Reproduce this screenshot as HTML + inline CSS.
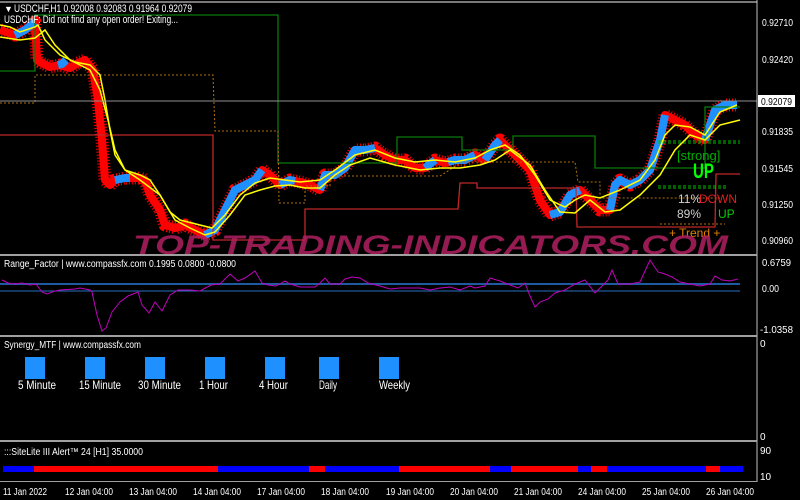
<!DOCTYPE html>
<html><head><meta charset="utf-8"><style>
html,body{margin:0;padding:0;background:#000;width:800px;height:500px;overflow:hidden}
svg{display:block}
text{font-family:"Liberation Sans",sans-serif}
</style></head><body>
<svg width="800" height="500" xmlns="http://www.w3.org/2000/svg">
<rect width="800" height="500" fill="#000"/>
<defs>
<polyline id="pp" points="0,30 15,35 25,30 35,22 37,60 40,62 50,67 60,65 70,68 78,63 85,60 93,70 98,100 102,140 105,180 110,185 115,180 125,178 140,178 145,180 150,195 160,210 165,225 175,228 185,225 195,230 205,235 215,230 225,210 235,190 245,185 255,180 262,170 270,175 280,185 290,180 300,182 310,185 320,190 325,175 335,175 345,168 355,150 365,150 375,148 385,155 395,160 405,160 415,168 425,168 435,160 445,163 455,160 465,160 475,155 485,160 495,145 500,140 510,150 520,160 530,170 540,200 550,215 560,212 570,195 580,190 590,200 600,210 610,210 615,185 620,180 630,185 640,180 650,170 660,140 665,115 675,120 685,125 695,135 705,140 715,110 725,105 737,105"/>
</defs>
<g fill="none" stroke-linejoin="round">
<use href="#pp" stroke="#ff0000" stroke-width="13" stroke-dasharray="1,2"/>
<use href="#pp" stroke="#ff0000" stroke-width="8"/>
<g stroke="#1e90ff" stroke-width="8">
<polyline points="15,35 25,30 35,22"/>
<polyline points="58,65 62,64 66,60"/>
<polyline points="115,180 125,178 130,178"/>
<polyline points="205,235 215,230 225,210 235,190 245,185 255,180 262,170"/>
<polyline points="280,185 290,180 295,181"/>
<polyline points="320,190 325,175 335,175 345,168 355,150 365,150 375,148"/>
<polyline points="425,168 435,160"/>
<polyline points="448,162 455,160 465,160 475,155"/>
<polyline points="485,160 495,145 500,140"/>
<polyline points="550,215 560,212 570,195 580,190"/>
<polyline points="610,210 615,185 620,180 630,185 640,180 650,170 660,140 665,115"/>
<polyline points="705,140 715,110 725,105 737,105"/>
</g>
</g>
<!-- step lines -->
<polyline fill="none" stroke="#0a7a0a" stroke-width="1.3" points="0,71 35,71 35,15 278,15 278,163 397,163 397,137 462,137 462,150 513,150 513,136 595,136 595,168 705,168 705,107 740,107"/>
<polyline fill="none" stroke="#c02828" stroke-width="1.3" points="0,135 213,135 213,240 305,240 305,209 458,209 460,183 477,183 477,188 576,188 577,227 715,227 716,174 740,174"/>
<polyline fill="none" stroke="#b07010" stroke-width="1" stroke-dasharray="2,2" points="0,103 35,103 35,75 213,75 215,131 278,131 279,203 305,203 305,186 330,186 330,176 440,176 462,162 575,162 578,182 600,182 600,198 720,198"/>
<line x1="660" y1="224" x2="725" y2="224" stroke="#b07010" stroke-dasharray="2,2"/>
<line x1="658" y1="141" x2="740" y2="141" stroke="#00c000" stroke-dasharray="3,2"/>
<line x1="658" y1="143" x2="740" y2="143" stroke="#00c000" stroke-dasharray="3,2"/>
<line x1="658" y1="186" x2="727" y2="186" stroke="#00c000" stroke-dasharray="3,2"/>
<line x1="658" y1="188" x2="727" y2="188" stroke="#00c000" stroke-dasharray="3,2"/>
<polyline fill="none" stroke="#ffff00" stroke-width="1.5" points="0,25 10,27 20,32 35,27 38,25 45,40 60,55 75,62 90,65 100,75 105,100 110,130 115,155 125,170 140,175 150,180 160,195 170,212 180,220 200,225 212,228 225,215 240,195 255,183 270,178 285,180 300,182 320,180 335,170 355,155 375,150 395,158 415,162 435,160 455,162 475,158 490,150 505,145 520,155 535,175 550,200 565,207 575,200 585,195 600,198 620,190 640,180 655,160 665,135 675,125 690,127 705,135 720,112 737,105"/>
<polyline fill="none" stroke="#ffff00" stroke-width="1.5" points="0,37 20,40 35,38 45,30 55,45 70,60 90,70 100,90 108,120 115,150 125,170 140,180 160,195 175,220 190,228 205,235 215,232 230,215 245,195 260,190 275,186 290,185 305,188 320,188 335,175 350,165 370,158 395,165 420,170 440,168 460,168 480,165 495,160 510,150 530,165 545,190 560,212 575,213 590,200 605,212 620,210 640,195 660,175 675,150 690,135 705,140 720,125 740,120"/>
<!-- top & grid -->
<line x1="0" y1="2" x2="757" y2="2" stroke="#a0a0a0" stroke-width="1.5"/>
<line x1="0" y1="101" x2="757" y2="101" stroke="#909090" stroke-width="1"/>
<text x="4" y="12" font-size="9" fill="#fff">▼</text>
<text x="14" y="12" font-size="11" fill="#fff" textLength="178" lengthAdjust="spacingAndGlyphs">USDCHF,H1  0.92008 0.92083 0.91964 0.92079</text>
<text x="4" y="23" font-size="11" fill="#fff" textLength="174" lengthAdjust="spacingAndGlyphs">USDCHF: Did not find any open order! Exiting...</text>
<!-- signal text -->
<text x="677" y="160" font-size="13" fill="#00b000">[strong]</text>
<text x="693" y="178" font-size="21" font-weight="bold" fill="#00ff00" textLength="21" lengthAdjust="spacingAndGlyphs">UP</text>
<text x="678" y="203" font-size="12" fill="#d0d0d0">11%</text>
<text x="699" y="203" font-size="12" fill="#e02020">DOWN</text>
<text x="677" y="218" font-size="12" fill="#d0d0d0">89%</text>
<text x="718" y="218" font-size="12" fill="#00d000">UP</text>
<text x="669" y="237" font-size="12" fill="#e08000">+  Trend   +</text>
<!-- watermark -->
<text x="133" y="254" font-size="27" font-weight="bold" font-style="italic" fill="#b02060" fill-opacity="0.85" textLength="595" lengthAdjust="spacingAndGlyphs">TOP-TRADING-INDICATORS.COM</text>
<!-- right axis -->
<line x1="757" y1="0" x2="757" y2="482" stroke="#c0c0c0"/>
<g font-size="10" fill="#fff">
<text x="762" y="26" textLength="31" lengthAdjust="spacingAndGlyphs">0.92710</text><text x="762" y="63" textLength="31" lengthAdjust="spacingAndGlyphs">0.92420</text>
<text x="762" y="135" textLength="31" lengthAdjust="spacingAndGlyphs">0.91835</text><text x="762" y="172" textLength="31" lengthAdjust="spacingAndGlyphs">0.91545</text>
<text x="762" y="208" textLength="31" lengthAdjust="spacingAndGlyphs">0.91250</text><text x="762" y="244" textLength="31" lengthAdjust="spacingAndGlyphs">0.90960</text>
</g>
<rect x="758" y="95" width="37" height="12" fill="#fff"/>
<text x="761" y="105" font-size="10" fill="#000" textLength="31" lengthAdjust="spacingAndGlyphs">0.92079</text>
<!-- separators -->
<rect x="0" y="254" width="757" height="2" fill="#a0a0a0"/>
<rect x="0" y="335" width="757" height="2" fill="#a0a0a0"/>
<rect x="0" y="440" width="757" height="2" fill="#a0a0a0"/>
<rect x="0" y="481" width="757" height="1" fill="#a0a0a0"/>
<!-- range factor -->
<text x="4" y="267" font-size="10" fill="#fff" textLength="232" lengthAdjust="spacingAndGlyphs">Range_Factor | www.compassfx.com   0.1995 0.0800 -0.0800</text>
<line x1="0" y1="284" x2="740" y2="284" stroke="#1e5aa0" stroke-width="2"/>
<line x1="0" y1="291" x2="740" y2="291" stroke="#2a70c0" stroke-width="1"/>
<polyline fill="none" stroke="#c000c0" stroke-width="1" points="2,280 8,283 15,284 22,283 30,285 36,284 42,292 47,294 55,291 60,290 75,289 80,288 90,290 92,292 97,315 102,331 106,328 112,312 120,302 128,296 138,292 142,305 149,313 155,302 162,311 170,295 178,290 190,290 200,291 211,285 220,284 230,274 238,281 245,278 255,271 262,283 268,285 276,286 285,281 290,284 300,287 315,287 320,283 325,278 330,284 340,284 345,279 352,277 360,278 368,283 380,286 390,289 400,288 410,288 420,288 430,290 440,288 450,287 460,290 470,286 475,288 485,286 490,278 500,281 505,283 510,285 518,288 525,283 530,296 535,307 540,302 548,299 555,293 565,290 575,284 585,280 595,293 602,286 608,280 612,270 618,284 630,284 640,282 650,260 658,272 665,274 672,277 680,282 690,284 700,286 710,284 715,276 722,280 730,281 738,279"/>
<g font-size="10" fill="#fff"><text x="762" y="266" textLength="29" lengthAdjust="spacingAndGlyphs">0.6759</text><text x="762" y="292" textLength="17" lengthAdjust="spacingAndGlyphs">0.00</text><text x="760" y="333" textLength="33" lengthAdjust="spacingAndGlyphs">-1.0358</text></g>
<!-- synergy -->
<text x="4" y="348" font-size="10" fill="#fff" textLength="137" lengthAdjust="spacingAndGlyphs">Synergy_MTF | www.compassfx.com</text>
<g fill="#1e90ff">
<rect x="25" y="357" width="20" height="22"/><rect x="85" y="357" width="20" height="22"/><rect x="145" y="357" width="20" height="22"/><rect x="205" y="357" width="20" height="22"/><rect x="265" y="357" width="20" height="22"/><rect x="319" y="357" width="20" height="22"/><rect x="379" y="357" width="20" height="22"/>
</g>
<g font-size="12" fill="#fff">
<text x="18" y="389" textLength="38" lengthAdjust="spacingAndGlyphs">5 Minute</text><text x="79" y="389" textLength="42" lengthAdjust="spacingAndGlyphs">15 Minute</text><text x="138" y="389" textLength="43" lengthAdjust="spacingAndGlyphs">30 Minute</text><text x="199" y="389" textLength="29" lengthAdjust="spacingAndGlyphs">1 Hour</text><text x="259" y="389" textLength="29" lengthAdjust="spacingAndGlyphs">4 Hour</text><text x="319" y="389" textLength="18" lengthAdjust="spacingAndGlyphs">Daily</text><text x="379" y="389" textLength="31" lengthAdjust="spacingAndGlyphs">Weekly</text>
</g>
<g font-size="10" fill="#fff"><text x="760" y="347">0</text><text x="760" y="440">0</text></g>
<!-- sitelite -->
<text x="4" y="455" font-size="10" fill="#fff" textLength="139" lengthAdjust="spacingAndGlyphs">:::SiteLite III Alert™ 24 [H1] 35.0000</text>
<g>
<rect x="3" y="466" width="31" height="6" fill="#0000ff"/>
<rect x="34" y="466" width="184" height="6" fill="#ff0000"/>
<rect x="218" y="466" width="91" height="6" fill="#0000ff"/>
<rect x="309" y="466" width="16" height="6" fill="#ff0000"/>
<rect x="325" y="466" width="74" height="6" fill="#0000ff"/>
<rect x="399" y="466" width="91" height="6" fill="#ff0000"/>
<rect x="490" y="466" width="21" height="6" fill="#0000ff"/>
<rect x="511" y="466" width="67" height="6" fill="#ff0000"/>
<rect x="578" y="466" width="13" height="6" fill="#0000ff"/>
<rect x="591" y="466" width="16" height="6" fill="#ff0000"/>
<rect x="607" y="466" width="99" height="6" fill="#0000ff"/>
<rect x="706" y="466" width="14" height="6" fill="#ff0000"/>
<rect x="720" y="466" width="23" height="6" fill="#0000ff"/>
</g>
<g font-size="10" fill="#fff"><text x="760" y="454">90</text><text x="760" y="480">10</text></g>
<!-- time axis -->
<g font-size="10" fill="#fff">
<text x="3" y="495" textLength="44" lengthAdjust="spacingAndGlyphs">11 Jan 2022</text><text x="65" y="495" textLength="48" lengthAdjust="spacingAndGlyphs">12 Jan 04:00</text><text x="129" y="495" textLength="48" lengthAdjust="spacingAndGlyphs">13 Jan 04:00</text><text x="193" y="495" textLength="48" lengthAdjust="spacingAndGlyphs">14 Jan 04:00</text><text x="257" y="495" textLength="48" lengthAdjust="spacingAndGlyphs">17 Jan 04:00</text><text x="321" y="495" textLength="48" lengthAdjust="spacingAndGlyphs">18 Jan 04:00</text><text x="386" y="495" textLength="48" lengthAdjust="spacingAndGlyphs">19 Jan 04:00</text><text x="450" y="495" textLength="48" lengthAdjust="spacingAndGlyphs">20 Jan 04:00</text><text x="514" y="495" textLength="48" lengthAdjust="spacingAndGlyphs">21 Jan 04:00</text><text x="578" y="495" textLength="48" lengthAdjust="spacingAndGlyphs">24 Jan 04:00</text><text x="642" y="495" textLength="48" lengthAdjust="spacingAndGlyphs">25 Jan 04:00</text><text x="706" y="495" textLength="48" lengthAdjust="spacingAndGlyphs">26 Jan 04:00</text>
</g>
</svg>
</body></html>
